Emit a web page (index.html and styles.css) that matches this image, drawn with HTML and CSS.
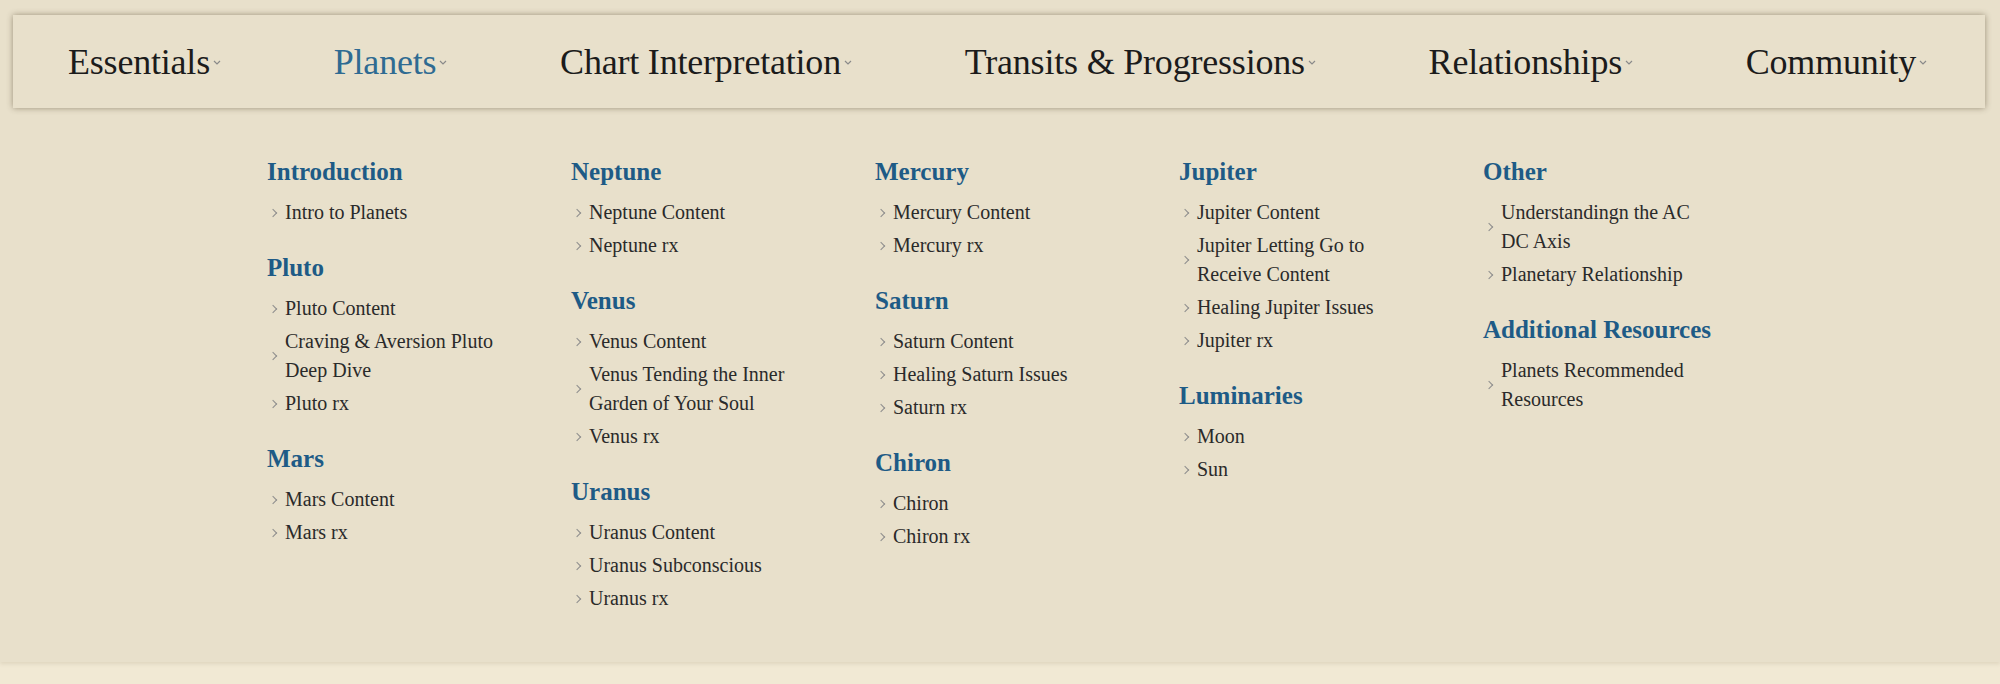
FILE: index.html
```html
<!DOCTYPE html>
<html lang="en">
<head>
<meta charset="utf-8">
<title>Planets menu</title>
<link rel="stylesheet" href="styles.css">
</head>
<body>
<header class="site-header">
  <div class="nav-wrap">
    <nav class="menubar">
      <a class="menu-item" href="#">Essentials<svg class="caret" viewBox="0 0 8 5"><path d="M1 1l3 3 3-3"/></svg></a>
      <a class="menu-item active" href="#">Planets<svg class="caret" viewBox="0 0 8 5"><path d="M1 1l3 3 3-3"/></svg></a>
      <a class="menu-item" href="#">Chart Interpretation<svg class="caret" viewBox="0 0 8 5"><path d="M1 1l3 3 3-3"/></svg></a>
      <a class="menu-item" href="#">Transits &amp; Progressions<svg class="caret" viewBox="0 0 8 5"><path d="M1 1l3 3 3-3"/></svg></a>
      <a class="menu-item" href="#">Relationships<svg class="caret" viewBox="0 0 8 5"><path d="M1 1l3 3 3-3"/></svg></a>
      <a class="menu-item" href="#">Community<svg class="caret" viewBox="0 0 8 5"><path d="M1 1l3 3 3-3"/></svg></a>
    </nav>
  </div>
  <div class="mega">
    <div class="mega-grid">
      <div class="col">
        <div class="group">
          <h3>Introduction</h3>
          <ul>
            <li><a href="#">Intro to Planets</a></li>
          </ul>
        </div>
        <div class="group">
          <h3>Pluto</h3>
          <ul>
            <li><a href="#">Pluto Content</a></li>
            <li><a href="#">Craving &amp; Aversion Pluto Deep Dive</a></li>
            <li><a href="#">Pluto rx</a></li>
          </ul>
        </div>
        <div class="group">
          <h3>Mars</h3>
          <ul>
            <li><a href="#">Mars Content</a></li>
            <li><a href="#">Mars rx</a></li>
          </ul>
        </div>
      </div>
      <div class="col">
        <div class="group">
          <h3>Neptune</h3>
          <ul>
            <li><a href="#">Neptune Content</a></li>
            <li><a href="#">Neptune rx</a></li>
          </ul>
        </div>
        <div class="group">
          <h3>Venus</h3>
          <ul>
            <li><a href="#">Venus Content</a></li>
            <li><a href="#">Venus Tending the Inner Garden of Your Soul</a></li>
            <li><a href="#">Venus rx</a></li>
          </ul>
        </div>
        <div class="group">
          <h3>Uranus</h3>
          <ul>
            <li><a href="#">Uranus Content</a></li>
            <li><a href="#">Uranus Subconscious</a></li>
            <li><a href="#">Uranus rx</a></li>
          </ul>
        </div>
      </div>
      <div class="col">
        <div class="group">
          <h3>Mercury</h3>
          <ul>
            <li><a href="#">Mercury Content</a></li>
            <li><a href="#">Mercury rx</a></li>
          </ul>
        </div>
        <div class="group">
          <h3>Saturn</h3>
          <ul>
            <li><a href="#">Saturn Content</a></li>
            <li><a href="#">Healing Saturn Issues</a></li>
            <li><a href="#">Saturn rx</a></li>
          </ul>
        </div>
        <div class="group">
          <h3>Chiron</h3>
          <ul>
            <li><a href="#">Chiron</a></li>
            <li><a href="#">Chiron rx</a></li>
          </ul>
        </div>
      </div>
      <div class="col">
        <div class="group">
          <h3>Jupiter</h3>
          <ul>
            <li><a href="#">Jupiter Content</a></li>
            <li><a href="#">Jupiter Letting Go to Receive Content</a></li>
            <li><a href="#">Healing Jupiter Issues</a></li>
            <li><a href="#">Jupiter rx</a></li>
          </ul>
        </div>
        <div class="group">
          <h3>Luminaries</h3>
          <ul>
            <li><a href="#">Moon</a></li>
            <li><a href="#">Sun</a></li>
          </ul>
        </div>
      </div>
      <div class="col">
        <div class="group">
          <h3>Other</h3>
          <ul>
            <li><a href="#">Understandingn the AC DC Axis</a></li>
            <li><a href="#">Planetary Relationship</a></li>
          </ul>
        </div>
        <div class="group">
          <h3>Additional Resources</h3>
          <ul>
            <li><a href="#">Planets Recommended Resources</a></li>
          </ul>
        </div>
      </div>
    </div>
  </div>
</header>
<main class="page-body"></main>
</body>
</html>
```

FILE: styles.css
```css
html, body {
  margin: 0;
  padding: 0;
}

body {
  background: #f1e9d4;
  font-family: "Liberation Serif", "Times New Roman", serif;
  color: #222;
  height: 684px;
  overflow: hidden;
}

.site-header {
  background: #e8e0cb;
  box-shadow: 0 2px 4px rgba(90, 70, 40, 0.12);
}

.nav-wrap {
  padding: 15px 15px 0 13px;
  position: relative;
  z-index: 2;
}

.menubar {
  height: 93px;
  display: flex;
  align-items: center;
  justify-content: space-between;
  padding: 0 58px 0 55px;
  background: #e8e0cb;
  box-shadow: 0 0 6px rgba(60, 45, 20, 0.45);
}

.menu-item {
  display: flex;
  align-items: center;
  font-size: 36px;
  color: #1b1b1b;
  text-decoration: none;
  letter-spacing: -0.2px;
}

.menu-item.active {
  color: #2f6b92;
}

.caret {
  width: 8px;
  height: 5px;
  margin-left: 3px;
  margin-top: 2px;
  fill: none;
  stroke: #8a8a8a;
  stroke-width: 1.2;
}

.mega {
  height: 505px;
  padding-top: 49px;
}

.mega-grid {
  display: grid;
  grid-template-columns: repeat(5, 304px);
  padding-left: 267px;
}

.group {
  margin-bottom: 24px;
}

.group h3 {
  margin: 0 0 9px;
  font-size: 25px;
  line-height: 30px;
  font-weight: bold;
  color: #1e5b86;
}

.group ul {
  list-style: none;
  margin: 0;
  padding: 0;
}

.group li {
  display: flex;
  align-items: center;
  padding: 2px 0;
}

.group li::before {
  content: "";
  flex: none;
  width: 5px;
  height: 5px;
  margin: 0 9px 0 3px;
  border-right: 1.3px solid #8c8c8c;
  border-top: 1.3px solid #8c8c8c;
  transform: rotate(45deg);
}

.group li a {
  display: block;
  max-width: 214px;
  font-size: 20px;
  line-height: 29px;
  color: #2a2a2a;
  text-decoration: none;
}
```
